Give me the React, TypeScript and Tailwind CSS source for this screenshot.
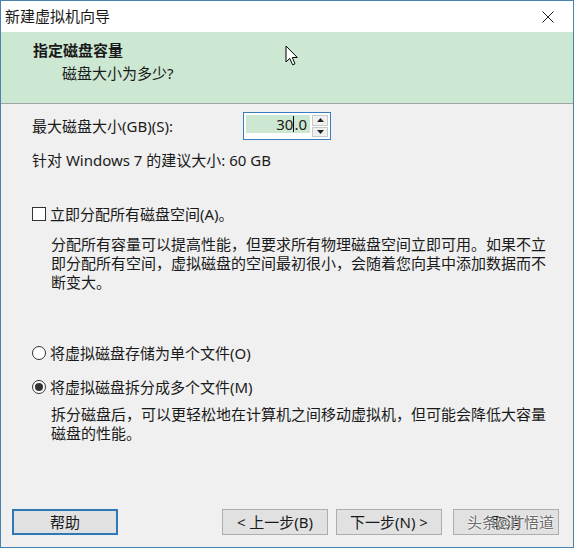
import React from "react";

const font = { fontFamily: "'Noto Sans', 'Noto Sans CJK SC', sans-serif" };

function Btn({ children, focused }: { children: React.ReactNode; focused?: boolean }) {
  return (
    <div
      className={
        "w-[106px] h-[26px] flex items-center justify-center bg-[#e1e1e1] text-[15px] leading-none text-[#1a1a1a] " +
        (focused ? "border-2 border-[#2f78b8]" : "border border-[#adadad]")
      }
    >
      {children}
    </div>
  );
}

export default function App() {
  return (
    <div
      className="w-[574px] h-[548px] border border-[#4b82ad] bg-[#f0f0f0] flex flex-col text-[#1a1a1a] overflow-hidden"
      style={font}
    >
      {/* Title bar */}
      <div className="h-[31px] bg-white flex items-center justify-between pl-[4px] pr-[19px] shrink-0">
        <span className="text-[15px] leading-none">新建虚拟机向导</span>
        <svg width="12" height="12" viewBox="0 0 12 12">
          <path d="M0.5 0.5 L11.5 11.5 M11.5 0.5 L0.5 11.5" stroke="#222" strokeWidth="1" />
        </svg>
      </div>

      {/* Header */}
      <div className="relative h-[72px] bg-[#cde8d2] border-b border-[#a3a3a3] shrink-0 pl-[32px] pt-[8px]">
        <div className="text-[15px] font-bold leading-[20px]">指定磁盘容量</div>
        <div className="text-[15px] leading-[20px] mt-[3px] pl-[29px]">磁盘大小为多少?</div>
        <svg className="absolute left-[284px] top-[13px]" width="14" height="22" viewBox="0 0 14 22">
          <path
            d="M1 1 L1 17 L4.8 13.4 L7.6 19.8 L10 18.8 L7.3 12.5 L12.3 12.5 Z"
            fill="#fff"
            stroke="#000"
            strokeWidth="1"
            strokeLinejoin="miter"
          />
        </svg>
      </div>

      {/* Body */}
      <div className="flex-1 flex flex-col pl-[31px] pr-[16px] text-[15px]">
        <div className="flex items-center mt-[8px] h-[28px]">
          <span className="w-[211px] leading-none">最大磁盘大小(GB)(S):</span>
          <div className="w-[88px] h-[28px] border border-[#3a7cc0] bg-white flex items-stretch p-[2px]">
            <div className="flex-1 flex flex-col">
              <div className="h-[18px] bg-[#cde8d2] flex items-center justify-end pr-[3px] leading-none">
                <span>30</span>
                <span className="w-px h-[16px] bg-black" />
                <span>.0</span>
              </div>
            </div>
            <div className="w-[16px] flex flex-col gap-[1px] ml-[2px]">
              <div className="flex-1 bg-[#f0f0f0] border border-[#c9c9c9] flex items-center justify-center">
                <svg width="7" height="4" viewBox="0 0 7 4"><path d="M0 4 L3.5 0 L7 4 Z" fill="#222" /></svg>
              </div>
              <div className="flex-1 bg-[#f0f0f0] border border-[#c9c9c9] flex items-center justify-center">
                <svg width="7" height="4" viewBox="0 0 7 4"><path d="M0 0 L3.5 4 L7 0 Z" fill="#222" /></svg>
              </div>
            </div>
          </div>
        </div>

        <div className="leading-[18px] mt-[11px]">针对 Windows 7 的建议大小: 60 GB</div>

        <div className="flex items-center mt-[36px] h-[18px]">
          <div className="w-[14px] h-[14px] border border-[#333] bg-white mr-[4px]" />
          <span className="leading-none">立即分配所有磁盘空间(A)。</span>
        </div>

        <div className="leading-[19px] mt-[12px] pl-[19px] whitespace-nowrap">
          分配所有容量可以提高性能，但要求所有物理磁盘空间立即可用。如果不立
          <br />
          即分配所有空间，虚拟磁盘的空间最初很小，会随着您向其中添加数据而不
          <br />
          断变大。
        </div>

        <div className="flex items-center mt-[52px] h-[18px]">
          <div className="w-[14px] h-[14px] rounded-full border border-[#333] bg-white mr-[4px]" />
          <span className="leading-none">将虚拟磁盘存储为单个文件(O)</span>
        </div>

        <div className="flex items-center mt-[16px] h-[18px]">
          <div className="w-[14px] h-[14px] rounded-full border border-[#333] bg-white mr-[4px] flex items-center justify-center">
            <div className="w-[8px] h-[8px] rounded-full bg-[#333]" />
          </div>
          <span className="leading-none">将虚拟磁盘拆分成多个文件(M)</span>
        </div>

        <div className="leading-[19px] mt-[9px] pl-[19px] whitespace-nowrap">
          拆分磁盘后，可以更轻松地在计算机之间移动虚拟机，但可能会降低大容量
          <br />
          磁盘的性能。
        </div>
      </div>

      {/* Footer */}
      <div className="h-[38px] flex items-start pl-[11px] shrink-0">
        <Btn focused>帮助</Btn>
        <div className="ml-[104px] flex gap-[8px]">
          <Btn>&lt; 上一步(B)</Btn>
          <Btn>下一步(N) &gt;</Btn>
        </div>
        <div className="relative ml-[11px]">
          <Btn>取消</Btn>
          <span
            className="absolute left-[14px] top-[3px] text-[15px] leading-[20px] text-[#6a6a6a]"
            style={{ textShadow: "0 0 2px #fff, 0 0 2px #fff" }}
          >
            头条@IT悟道
          </span>
        </div>
      </div>
    </div>
  );
}
